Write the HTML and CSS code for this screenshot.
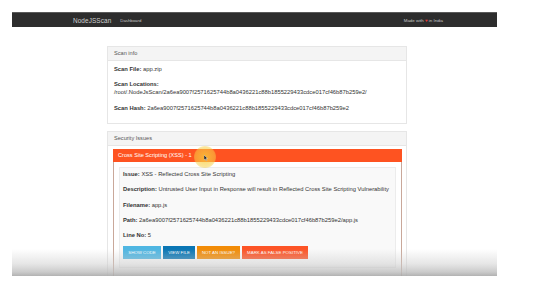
FILE: index.html
```html
<!DOCTYPE html>
<html>
<head>
<meta charset="utf-8">
<link rel="stylesheet" href="styles.css">
</head>
<body>
<div class="frame">
  <nav class="navbar">
    <div class="nav-left">
      <span class="brand">NodeJSScan</span>
      <span class="nav-link">Dashboard</span>
    </div>
    <div class="nav-right">Made with <span class="heart">♥</span> in India</div>
  </nav>
  <main class="container">
    <section class="panel">
      <div class="panel-head">Scan info</div>
      <div class="panel-body info">
        <p><b>Scan File:</b> app.zip</p>
        <p><b>Scan Locations:</b><br>/root/.NodeJsScan/2a6ea9007f2571625744b8a0436221c88b1855229433cdce017cf46b87b259e2/</p>
        <p><b>Scan Hash:</b> 2a6ea9007f2571625744b8a0436221c88b1855229433cdce017cf46b87b259e2</p>
      </div>
    </section>
    <section class="panel">
      <div class="panel-head">Security Issues</div>
      <div class="panel-body issues">
        <div class="issue-card">
          <div class="issue-title">Cross Site Scripting (XSS) - 1</div>
          <div class="issue-box">
            <p><b>Issue:</b> XSS - Reflected Cross Site Scripting</p>
            <p><b>Description:</b> Untrusted User Input in Response will result in Reflected Cross Site Scripting Vulnerability</p>
            <p><b>Filename:</b> app.js</p>
            <p><b>Path:</b> 2a6ea9007f2571625744b8a0436221c88b1855229433cdce017cf46b87b259e2/app.js</p>
            <p><b>Line No:</b> 5</p>
            <div class="buttons">
              <span class="btn btn-info">SHOW CODE</span>
              <span class="btn btn-primary">VIEW FILE</span>
              <span class="btn btn-warn">NOT AN ISSUE?</span>
              <span class="btn btn-danger">MARK AS FALSE POSITIVE</span>
            </div>
          </div>
        </div>
      </div>
    </section>
  </main>
  <div class="cursor-hl">
    <svg class="cursor" width="4" height="6" viewBox="0 0 4 6"><path d="M0 0 L0 5 L1.2 3.9 L2 5.8 L2.8 5.4 L2 3.6 L3.6 3.6 Z" fill="#222" stroke="#fff" stroke-width="0.4"/></svg>
  </div>
  <div class="player-fade"></div>
</div>
</body>
</html>
```
FILE: styles.css
```css
html, body {
  margin: 0;
  padding: 0;
  background: #ffffff;
}
body {
  font-family: "Liberation Sans", Arial, sans-serif;
  color: #333;
}
.frame {
  position: relative;
  margin: 12px 0 0 12px;
  width: 485px;
  height: 264px;
  overflow: hidden;
  background: #fff;
}
.navbar {
  height: 14px;
  background: #2d2d2d;
  border-top: 1px solid #5a5a5a;
  display: flex;
  align-items: center;
  justify-content: space-between;
  padding: 0 54px 0 61px;
}
.nav-left {
  display: flex;
  align-items: center;
  gap: 9px;
}
.brand {
  color: #d0d0d0;
  font-size: 6.4px;
  letter-spacing: 0.1px;
}
.nav-link {
  color: #c8c8c8;
  font-size: 4.3px;
}
.nav-right {
  color: #c8c8c8;
  font-size: 4.4px;
}
.heart {
  color: #e53935;
}
.container {
  margin: 19px 0 0 95px;
  width: 300px;
  display: flex;
  flex-direction: column;
  gap: 7px;
}
.panel {
  border: 1px solid #e6e6e6;
  background: #fff;
}
.panel-head {
  height: 13px;
  line-height: 13px;
  background: #f4f4f4;
  border-bottom: 1px solid #e6e6e6;
  padding-left: 6px;
  font-size: 5.6px;
  color: #555;
}
.panel-body {
  font-size: 5.8px;
  color: #333;
}
.panel-body p {
  margin: 0;
  white-space: nowrap;
}
.info {
  padding: 4px 6px 11px;
}
.info p {
  line-height: 8px;
  margin-bottom: 7px;
}
.info p:nth-child(2) {
  margin-bottom: 8px;
}
.info p:last-child {
  margin-bottom: 0;
}
.issues {
  padding: 3px 4px 0 5px;
}
.issue-card {
  border-left: 1px solid #c9a89a;
  border-right: 1px solid #c9a89a;
  height: 140px;
}
.issue-title {
  height: 13px;
  line-height: 13px;
  background: #fe5321;
  color: #fff;
  font-size: 5.6px;
  padding-left: 5px;
  margin: 0 -1px;
}
.issue-box {
  margin: 5px 5px 0 5px;
  background: #f9f9f9;
  border: 1px solid #ececec;
  padding: 3px 3px 8px;
}
.issue-box p {
  line-height: 7px;
  margin-bottom: 8.3px;
}
.buttons {
  display: flex;
  gap: 2px;
  margin-top: -1.3px;
}
.btn {
  height: 13px;
  line-height: 13px;
  padding: 0 4px;
  font-size: 4.4px;
  color: #fff;
  display: inline-block;
  text-align: center;
  white-space: nowrap;
}
.btn-info { background: #4fb6e2; width: 30px; }
.btn-primary { background: #0a76b4; width: 24px; }
.btn-warn { background: #f28c07; width: 35px; }
.btn-danger { background: #fd5426; width: 58px; }
.cursor-hl {
  position: absolute;
  left: 182px;
  top: 134px;
  width: 22px;
  height: 22px;
  border-radius: 50%;
  background: radial-gradient(circle, rgba(248,205,60,0.8) 0%, rgba(248,208,70,0.55) 62%, rgba(250,215,90,0) 100%);
}
.cursor {
  position: absolute;
  left: 10px;
  top: 9px;
}
.player-fade {
  position: absolute;
  left: 0;
  right: 0;
  bottom: 0;
  height: 27px;
  background: linear-gradient(to bottom, rgba(200,200,200,0) 0%, rgba(205,205,205,0.5) 55%, rgba(190,190,190,0.8) 85%, rgba(170,170,170,0.9) 100%);
}
```
